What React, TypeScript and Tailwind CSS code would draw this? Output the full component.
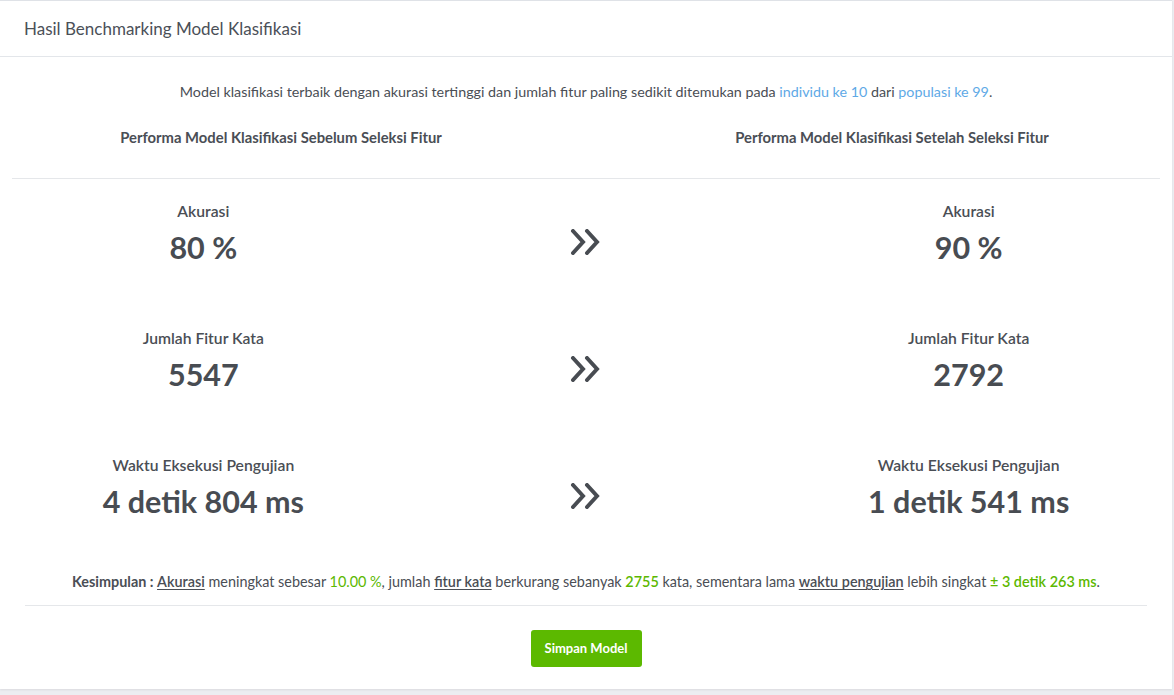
const font = { fontFamily: 'Lato, "Noto Sans", sans-serif' };

const Chevrons = (): JSX.Element => (
  <svg width="32" height="26" viewBox="0 0 32 26" fill="none" stroke="#484c52" strokeWidth="4" strokeLinecap="round" strokeLinejoin="miter">
    <path d="M3 2 L13 13 L3 24" />
    <path d="M17 2 L27 13 L17 24" />
  </svg>
);

const rows = [
  { label: 'Akurasi', before: '80 %', after: '90 %' },
  { label: 'Jumlah Fitur Kata', before: '5547', after: '2792' },
  { label: 'Waktu Eksekusi Pengujian', before: '4 detik 804 ms', after: '1 detik 541 ms' }
];

const Metric = ({ label, value }: { label: string; value: string }): JSX.Element => (
  <div className="flex flex-col items-center">
    <div className="text-[15.7px] font-semibold leading-[20px] text-[#4a4e55]">{label}</div>
    <div className="mt-[9px] text-[30.5px] font-bold leading-[35px] text-[#484c52]">{value}</div>
  </div>
);

export default function App(): JSX.Element {
  return (
    <div className="min-h-[695px] w-[1174px] bg-[#ecedf1] text-[#4a4e55]" style={font}>
      <div className="w-[1172px] border-t border-[#dfe2e7] bg-white shadow-[0_1px_2px_rgba(0,0,0,0.08)]">
        <div className="flex h-[56px] items-center border-b border-[#e3e6ea] px-[24px]">
          <h3 className="text-[17px] font-normal text-[#4b5058]">Hasil Benchmarking Model Klasifikasi</h3>
        </div>
        <div className="px-[12px] pb-[22px]">
          <p className="pt-[25px] text-center text-[14.3px] leading-[20px]">
            Model klasifikasi terbaik dengan akurasi tertinggi dan jumlah fitur paling sedikit ditemukan pada{' '}
            <span className="text-[#5ea9e6]">individu ke 10</span> dari <span className="text-[#5ea9e6]">populasi ke 99</span>.
          </p>
          <div className="mt-[25px] grid grid-cols-2 text-[14.8px] font-bold leading-[20px] text-[#4a4e55]">
            <div className="pr-[36px] text-center">Performa Model Klasifikasi Sebelum Seleksi Fitur</div>
            <div className="pl-[38px] text-center">Performa Model Klasifikasi Setelah Seleksi Fitur</div>
          </div>
          <div className="mt-[31px] border-t border-[#e5e7ea]" />
          <div className="flex flex-col gap-[63px] pt-[22px]">
            {rows.map((row) => (
              <div className="grid grid-cols-3 items-start" key={row.label}>
                <Metric label={row.label} value={row.before} />
                <div className="flex justify-center pt-[28px]">
                  <Chevrons />
                </div>
                <Metric label={row.label} value={row.after} />
              </div>
            ))}
          </div>
          <div className="mx-[13px] mt-[53px] border-b border-[#e5e7ea] pb-[13px] text-center text-[14.4px] leading-[20px]">
            <span className="font-bold">Kesimpulan : </span>
            <span className="font-semibold underline underline-offset-2">Akurasi</span> meningkat sebesar{' '}
            <span className="text-[#5cb800]">10.00 %</span>, jumlah{' '}
            <span className="font-semibold underline underline-offset-2">fitur kata</span> berkurang sebanyak{' '}
            <span className="font-semibold text-[#5cb800]">2755</span> kata, sementara lama{' '}
            <span className="font-semibold underline underline-offset-2">waktu pengujian</span> lebih singkat{' '}
            <span className="font-semibold text-[#5cb800]">± 3 detik 263 ms</span>.
          </div>
          <div className="flex justify-center pt-[24px]">
            <button className="h-[37px] w-[111px] rounded-[3px] bg-[#5cb900] text-[13px] font-bold text-white">Simpan Model</button>
          </div>
        </div>
      </div>
    </div>
  );
}
